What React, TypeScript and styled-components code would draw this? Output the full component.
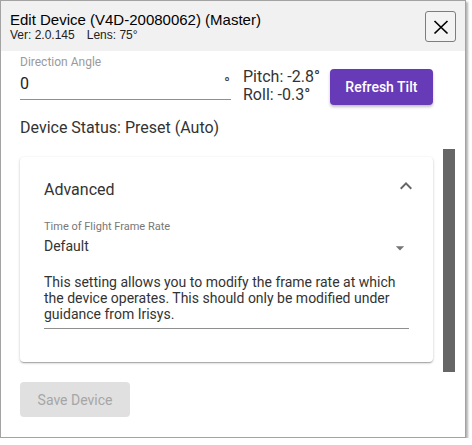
import { FC } from "react";
import styled, { createGlobalStyle } from "styled-components";

const GlobalStyle = createGlobalStyle`
  html, body {
    margin: 0;
    padding: 0;
    background: #fff;
  }
  body {
    font-family: Roboto, "Liberation Sans", Arial, sans-serif;
    color: #333;
  }
`;

const App: FC = () => {
  return (
    <>
      <GlobalStyle />
      <Dialog>
        <Header>
          <TitleBlock>
            <Title>Edit Device (V4D-20080062) (Master)</Title>
            <SubTitle>
              <span>Ver: 2.0.145</span>
              <SubItem>Lens: 75°</SubItem>
            </SubTitle>
          </TitleBlock>
          <CloseButton aria-label="close">
            <svg width="16" height="16" viewBox="0 0 16 16">
              <path d="M1.5 2 L14.5 14.5 M14.5 2 L1.5 14.5" stroke="#000" strokeWidth="1.7" />
            </svg>
          </CloseButton>
        </Header>

        <Body>
          <Content>
            <TopRow>
              <Field>
                <FieldLabel>Direction Angle</FieldLabel>
                <InputRow>
                  <InputValue>0</InputValue>
                  <Adornment>°</Adornment>
                </InputRow>
              </Field>
              <TiltGroup>
                <TiltText>
                  <TiltLine>Pitch: -2.8°</TiltLine>
                  <TiltLine>Roll: -0.3°</TiltLine>
                </TiltText>
                <PrimaryButton>Refresh Tilt</PrimaryButton>
              </TiltGroup>
            </TopRow>

            <Status>Device Status: Preset (Auto)</Status>

            <Card>
              <CardHeader>
                <CardTitle>Advanced</CardTitle>
                <ChevronIcon width="24" height="24" viewBox="0 0 24 24">
                  <path d="M7.41 15.41 12 10.83l4.59 4.58L18 14l-6-6-6 6z" fill="#666" />
                </ChevronIcon>
              </CardHeader>

              <SmallLabel>Time of Flight Frame Rate</SmallLabel>
              <SelectRow>
                <span>Default</span>
                <svg width="20" height="20" viewBox="0 0 24 24">
                  <path d="M7 10l5 5 5-5z" fill="#757575" />
                </svg>
              </SelectRow>

              <Description>
                This setting allows you to modify the frame rate at which the
                device operates. This should only be modified under guidance
                from Irisys.
              </Description>
            </Card>

            <SaveButton disabled>Save Device</SaveButton>
          </Content>

          <ScrollTrack>
            <ScrollThumb />
          </ScrollTrack>
        </Body>
      </Dialog>
    </>
  );
};

export default App;

const Dialog = styled.div`
  width: 466px;
  height: 438px;
  box-sizing: border-box;
  border: 1px solid #a3a3a3;
  background: #fff;
  box-shadow: 2px 2px 2px rgba(0, 0, 0, 0.3);
  display: flex;
  flex-direction: column;
  overflow: hidden;
`;

const Header = styled.div`
  height: 50px;
  flex-shrink: 0;
  box-sizing: border-box;
  background: #f1f1f1;
  padding: 10px 9px 0 9px;
  display: flex;
  justify-content: space-between;
  align-items: flex-start;
`;

const TitleBlock = styled.div`
  display: flex;
  flex-direction: column;
  font-family: "Liberation Sans", Arial, sans-serif;
  color: #000;
`;

const Title = styled.div`
  font-size: 15px;
  line-height: 17px;
`;

const SubTitle = styled.div`
  font-size: 12px;
  line-height: 14px;
  color: #222;
`;

const SubItem = styled.span`
  margin-left: 12px;
`;

const CloseButton = styled.button`
  width: 31px;
  height: 31px;
  padding: 0;
  border: 1px solid #7d7d7d;
  border-radius: 3px;
  background: #f3f3f3;
  display: flex;
  align-items: center;
  justify-content: center;
`;

const Body = styled.div`
  flex: 1;
  display: flex;
`;

const Content = styled.div`
  width: 413px;
  flex-shrink: 0;
  padding: 4px 0 0 19px;
  display: flex;
  flex-direction: column;
  align-items: flex-start;
`;

const TopRow = styled.div`
  display: flex;
  align-items: flex-start;
  white-space: nowrap;
`;

const Field = styled.div`
  width: 211px;
  flex-shrink: 0;
  display: flex;
  flex-direction: column;
`;

const FieldLabel = styled.div`
  font-size: 12px;
  line-height: 14px;
  color: #9a9a9a;
`;

const InputRow = styled.div`
  margin-top: 4px;
  padding: 1px 0 6px 0;
  border-bottom: 1px solid #8f8f8f;
  display: flex;
  justify-content: space-between;
  font-size: 16px;
  line-height: 19px;
  color: #222;
`;

const InputValue = styled.span``;

const Adornment = styled.span`
  margin-right: 1px;
  color: #444;
`;

const TiltGroup = styled.div`
  display: flex;
  align-items: flex-start;
  flex-shrink: 0;
  padding-top: 13px;
  margin-left: 12px;
`;

const TiltText = styled.div`
  display: flex;
  flex-direction: column;
  gap: 1px;
  font-size: 16px;
  color: #333;
`;

const TiltLine = styled.div`
  line-height: 16px;
  padding-top: 1px;
`;

const PrimaryButton = styled.button`
  margin-top: 1px;
  margin-left: 10px;
  height: 36px;
  width: 103px;
  padding: 0;
  border: none;
  border-radius: 4px;
  background: #673ab7;
  color: #fff;
  font-family: Roboto, sans-serif;
  font-size: 14px;
  font-weight: 500;
  white-space: nowrap;
  box-shadow: 0 2px 3px rgba(0, 0, 0, 0.25);
`;

const Status = styled.div`
  margin-top: 13px;
  font-size: 16px;
  line-height: 19px;
  color: #333;
`;

const Card = styled.div`
  margin-top: 20px;
  width: 413px;
  box-sizing: border-box;
  padding: 23px 24px 33px 24px;
  background: #fff;
  border-radius: 4px;
  box-shadow: 0 1px 3px rgba(0, 0, 0, 0.2), 0 1px 1px rgba(0, 0, 0, 0.14),
    0 2px 1px -1px rgba(0, 0, 0, 0.12);
`;

const CardHeader = styled.div`
  display: flex;
  justify-content: space-between;
  align-items: flex-start;
  height: 19px;
`;

const CardTitle = styled.div`
  font-size: 16px;
  line-height: 19px;
  color: #333;
`;

const ChevronIcon = styled.svg`
  margin-top: -6px;
  margin-right: -9px;
`;

const SmallLabel = styled.div`
  margin-top: 21px;
  font-size: 11px;
  line-height: 13px;
  color: #777;
`;

const SelectRow = styled.div`
  margin-top: 5px;
  display: flex;
  justify-content: space-between;
  align-items: flex-start;
  height: 16px;
  font-size: 14px;
  line-height: 16px;
  color: #333;

  svg {
    margin-right: -1px;
  }
`;

const Description = styled.div`
  margin-top: 20px;
  padding-bottom: 6px;
  border-bottom: 1px solid #8f8f8f;
  font-size: 14px;
  line-height: 16px;
  color: #333;
`;

const SaveButton = styled.button`
  margin-top: 20px;
  height: 35px;
  width: 110px;
  padding: 0;
  border: none;
  border-radius: 4px;
  background: #e0e0e0;
  color: #a6a6a6;
  font-family: Roboto, sans-serif;
  font-size: 14px;
  font-weight: 400;
`;

const ScrollTrack = styled.div`
  padding-left: 10px;
`;

const ScrollThumb = styled.div`
  margin-top: 98px;
  width: 12px;
  height: 223px;
  background: #666;
`;
